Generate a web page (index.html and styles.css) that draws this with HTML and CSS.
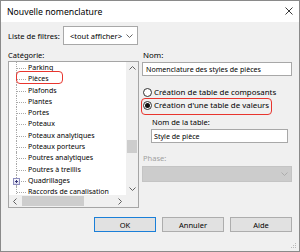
FILE: index.html
```html
<!DOCTYPE html>
<html lang="fr">
<head>
<meta charset="utf-8">
<title>Nouvelle nomenclature</title>
<link rel="stylesheet" href="styles.css">
</head>
<body>
<div class="window">
  <div class="titlebar">
    <span class="title">Nouvelle nomenclature</span>
    <svg class="close" width="8" height="8" viewBox="0 0 8 8"><path d="M0.5 0.5L7.5 7.5M7.5 0.5L0.5 7.5" stroke="#222" stroke-width="0.9" fill="none"/></svg>
  </div>
  <div class="content">
    <div class="filter-row">
      <span class="label">Liste de filtres:</span>
      <div class="combo">
        <span class="combo-text">&lt;tout afficher&gt;</span>
        <svg class="chev" width="7" height="4" viewBox="0 0 7 4"><path d="M0.5 0.5L3.5 3.5L6.5 0.5" stroke="#555" stroke-width="0.9" fill="none"/></svg>
      </div>
    </div>
    <div class="main">
      <div class="left">
        <div class="label">Catégorie:</div>
        <div class="tree">
          <ul class="items">
            <li>Parking</li>
            <li class="hl"><span class="ring"></span>Pièces</li>
            <li>Plafonds</li>
            <li>Plantes</li>
            <li>Portes</li>
            <li>Poteaux</li>
            <li>Poteaux analytiques</li>
            <li>Poteaux porteurs</li>
            <li>Poutres analytiques</li>
            <li>Poutres à treillis</li>
            <li><span class="expander"></span>Quadrillages</li>
            <li>Raccords de canalisation</li>
          </ul>
          <div class="vscroll">
            <div class="sbtn"><svg width="7" height="4" viewBox="0 0 7 4"><path d="M0.5 3.5L3.5 0.5L6.5 3.5" stroke="#606060" stroke-width="1" fill="none"/></svg></div>
            <div class="vtrack"><div class="vthumb"></div></div>
            <div class="sbtn"><svg width="7" height="4" viewBox="0 0 7 4"><path d="M0.5 0.5L3.5 3.5L6.5 0.5" stroke="#606060" stroke-width="1" fill="none"/></svg></div>
          </div>
          <div class="hscroll">
            <div class="sbtn"><svg width="4" height="7" viewBox="0 0 4 7"><path d="M3.5 0.5L0.5 3.5L3.5 6.5" stroke="#606060" stroke-width="1" fill="none"/></svg></div>
            <div class="htrack"><div class="hthumb"></div></div>
            <div class="sbtn"><svg width="4" height="7" viewBox="0 0 4 7"><path d="M0.5 0.5L3.5 3.5L0.5 6.5" stroke="#606060" stroke-width="1" fill="none"/></svg></div>
          </div>
          <div class="corner"></div>
        </div>
      </div>
      <div class="right">
        <div class="label">Nom:</div>
        <div class="textbox">Nomenclature des styles de pièces</div>
        <div class="radios">
          <label class="radio"><span class="dot"></span>Création de table de composants</label>
          <label class="radio checked"><span class="dot"></span>Création d'une table de valeurs</label>
        </div>
        <div class="label sub">Nom de la table:</div>
        <div class="textbox small">Style de pièce</div>
        <div class="label disabled">Phase:</div>
        <div class="combo disabled-combo">
          <span class="combo-text"></span>
          <svg class="chev" width="7" height="4" viewBox="0 0 7 4"><path d="M0.5 0.5L3.5 3.5L6.5 0.5" stroke="#a8a8a8" stroke-width="0.9" fill="none"/></svg>
        </div>
      </div>
    </div>
    <div class="buttons">
      <button class="btn default">OK</button>
      <button class="btn">Annuler</button>
      <button class="btn">Aide</button>
    </div>
  </div>
  <svg class="grip" width="6" height="6" viewBox="0 0 6 6"><g fill="#b8b8b8"><rect x="4" y="0" width="1" height="1"/><rect x="2" y="2" width="1" height="1"/><rect x="4" y="2" width="1" height="1"/><rect x="0" y="4" width="1" height="1"/><rect x="2" y="4" width="1" height="1"/><rect x="4" y="4" width="1" height="1"/></g></svg>
</div>
</body>
</html>
```
FILE: styles.css
```css
* { box-sizing: border-box; }
html, body { margin: 0; padding: 0; }
body {
  font-family: "Noto Sans", "Open Sans", sans-serif;
  font-size: 7.9px;
  color: #000;
  background: #f0f0f0;
}
.window {
  position: relative;
  width: 300px;
  height: 252px;
  border: 1px solid #8a8a8a;
  background: #f0f0f0;
  display: flex;
  flex-direction: column;
  overflow: hidden;
}
.titlebar {
  height: 21px;
  background: #fff;
  display: flex;
  align-items: center;
  justify-content: space-between;
  padding: 0 6px;
  flex: none;
}
.title { font-size: 8.7px; line-height: 12px; }
.close { margin-top: -1px; }
.content {
  flex: 1;
  padding: 4px 7px 0 7px;
  display: flex;
  flex-direction: column;
}
.label { line-height: 10px; height: 10px; white-space: nowrap; }
.filter-row {
  display: flex;
  align-items: center;
  height: 19px;
}
.filter-row .label { width: 55px; font-size: 7.6px; }
.combo {
  height: 19px;
  width: 75px;
  border: 1px solid #a8a8a8;
  background: #fff;
  display: flex;
  align-items: center;
  justify-content: space-between;
  padding: 0 4px 0 6px;
}
.combo-text { white-space: nowrap; font-size: 7.5px; }
.main {
  margin-top: 5px;
  display: grid;
  grid-template-columns: 131px 150px;
  column-gap: 3px;
}
.left .label { margin-bottom: 1px; font-size: 7.5px; }
.tree {
  height: 147px;
  border: 1px solid #a5a5a5;
  background: #fff;
  display: grid;
  grid-template-columns: 1fr 12px;
  grid-template-rows: 1fr 12px;
  overflow: hidden;
}
.items {
  list-style: none;
  margin: 0;
  padding: 0;
  overflow: hidden;
  position: relative;
  font-size: 7px;
}
.items li {
  position: relative;
  height: 11.3px;
  line-height: 11px;
  padding-left: 19px;
  white-space: nowrap;
}
.items li::before {
  content: "";
  position: absolute;
  left: 7px;
  top: 0;
  bottom: 0;
  border-left: 1px dotted #a8a8a8;
}
.items li::after {
  content: "";
  position: absolute;
  left: 8px;
  width: 9px;
  top: 6px;
  border-top: 1px dotted #a8a8a8;
}
.ring {
  position: absolute;
  left: 7px;
  top: -2.4px;
  width: 47px;
  height: 13px;
  border: 1.6px solid #e8352e;
  border-radius: 4px;
  z-index: 2;
}
.expander {
  position: absolute;
  left: 4px;
  top: 3px;
  width: 7px;
  height: 7px;
  border: 1px solid #8d8dbd;
  background: linear-gradient(#fafafe, #dcdcf0);
  z-index: 2;
}
.expander::before {
  content: "";
  position: absolute;
  left: 1px;
  top: 2px;
  width: 3px;
  height: 1px;
  background: #3a3a7a;
}
.expander::after {
  content: "";
  position: absolute;
  left: 2px;
  top: 1px;
  width: 1px;
  height: 3px;
  background: #3a3a7a;
}
.vscroll {
  background: #f0f0f0;
  display: flex;
  flex-direction: column;
}
.sbtn {
  flex: none;
  width: 12px;
  height: 12px;
  display: flex;
  align-items: center;
  justify-content: center;
}
.vtrack { flex: 1; }
.vthumb {
  margin: 66px 1px 0 1px;
  height: 13px;
  background: #cdcdcd;
}
.hscroll {
  background: #f0f0f0;
  display: flex;
}
.htrack { flex: 1; }
.hthumb {
  margin: 1px 0 0 1px;
  width: 62px;
  height: 10px;
  background: #cdcdcd;
}
.corner { background: #f0f0f0; }
.right .label { margin-left: 1px; }
.textbox {
  margin-top: 2px;
  height: 14px;
  border: 1px solid #a8a8a8;
  background: #fff;
  line-height: 12px;
  padding-left: 3px;
  white-space: nowrap;
  font-size: 7.1px;
}
.radios {
  margin-top: 10px;
  display: flex;
  flex-direction: column;
  gap: 1px;
}
.radio {
  position: relative;
  height: 12px;
  display: flex;
  align-items: center;
  white-space: nowrap;
}
.dot {
  width: 9px;
  height: 9px;
  margin: 0 2px 0 1px;
  border: 1px solid #333;
  border-radius: 50%;
  background: #fff;
  display: flex;
  align-items: center;
  justify-content: center;
}
.checked .dot::after {
  content: "";
  width: 5px;
  height: 5px;
  border-radius: 50%;
  background: #111;
}
.checked::after {
  content: "";
  position: absolute;
  left: -1px;
  top: -1px;
  width: 129px;
  height: 15px;
  border: 1.6px solid #e8352e;
  border-radius: 4px;
}
.label.sub { margin-top: 6px; margin-left: 10px; font-size: 7.5px; }
.textbox.small { margin: 2px 4px 0 9px; padding-left: 2px; }
.label.disabled { margin-top: 10px; color: #a0a0a0; font-size: 7.5px; }
.disabled-combo {
  margin-top: 3px;
  width: 150px;
  height: 16px;
  background: #cccccc;
  border-color: #c4c4c4;
  padding-right: 3px;
}
.buttons {
  margin-top: 9px;
  display: flex;
  justify-content: flex-end;
  gap: 6px;
}
.btn {
  font: inherit;
  font-size: 7.5px;
  width: 62px;
  height: 15px;
  padding: 0;
  background: #e1e1e1;
  border: 1px solid #adadad;
  color: #000;
  line-height: 12px;
}
.btn.default { border: 1.5px solid #1a7fd8; }
.grip { position: absolute; right: 2px; bottom: 2px; }
```
